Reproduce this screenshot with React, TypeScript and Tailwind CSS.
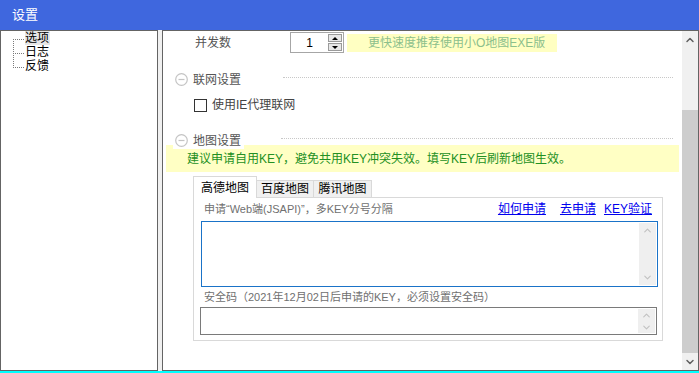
import { ChevronDown, ChevronUp } from 'lucide-react';

const font = "font-['Liberation_Sans','Noto_Sans_CJK_SC',sans-serif]";

function TreeLines() {
  return (
    <svg width="12" height="42" className="shrink-0" shapeRendering="crispEdges">
      <g stroke="#7a7a7a" strokeDasharray="1 1">
        <line x1="0.5" y1="8" x2="0.5" y2="36" />
        <line x1="0" y1="8.5" x2="11" y2="8.5" />
        <line x1="0" y1="22.5" x2="11" y2="22.5" />
        <line x1="0" y1="36.5" x2="11" y2="36.5" />
      </g>
    </svg>
  );
}

function MinusCircle() {
  return (
    <svg width="13" height="13" viewBox="0 0 13 13" className="shrink-0">
      <circle cx="6.5" cy="6.5" r="5.8" fill="none" stroke="#c4c4c4" strokeWidth="1.2" />
      <line x1="3.5" y1="6.5" x2="9.5" y2="6.5" stroke="#c4c4c4" strokeWidth="1.2" />
    </svg>
  );
}

function SectionHeader({ title, boxed }: { title: string; boxed?: boolean }) {
  const box = boxed ? 'ml-[10px] bg-white pl-[2px] pr-[3px]' : 'pl-[12px] pr-[3px]';
  return (
    <div className="flex h-[17px] items-center">
      <div className={`relative z-10 flex h-[17px] items-center gap-[5px] ${box}`}>
        <MinusCircle />
        <span className="text-[12px] leading-none text-[#555]">{title}</span>
      </div>
      <div className={`mb-[4px] mr-[9px] flex-1 border-t border-dotted border-[#c8c8c8] ${boxed ? 'ml-[37px]' : 'ml-[39px]'}`} />
    </div>
  );
}

function MiniScroll({ h, stacked }: { h: string; stacked?: boolean }) {
  return (
    <div className={`flex w-[17px] flex-col items-center bg-[#efefef] ${stacked ? 'justify-center gap-[1px]' : 'justify-between py-[2px]'} ${h}`}>
      <ChevronUp className="h-[11px] w-[11px] text-[#c2c2c2]" strokeWidth={2.5} />
      <ChevronDown className="h-[11px] w-[11px] text-[#c2c2c2]" strokeWidth={2.5} />
    </div>
  );
}

export default function App() {
  return (
    <div className={`flex h-[373px] w-[699px] flex-col overflow-hidden bg-[#f0f0f0] ${font}`}>
      <div className="flex h-[30px] items-center bg-[#3f67de] pl-[12px] text-[13px] text-white">设置</div>

      <div className="flex h-[341px] gap-[4px]">
        <div className="w-[158px] border border-[#646464] bg-white pl-[12px]">
          <div className="flex">
            <TreeLines />
            <div className="flex flex-col text-[12px] leading-[14px] text-black">
              <span className="w-fit bg-[#e6e6e6] pr-[1px]">选项</span>
              <span>日志</span>
              <span>反馈</span>
            </div>
          </div>
        </div>

        <div className="flex w-[537px] border border-[#646464] bg-white">
          <div className="flex-1 pt-[1px]">
            {/* 并发数 */}
            <div className="flex h-[21px] items-center pl-[32px]">
              <span className="w-[95px] text-[12px] text-[#555]">并发数</span>
              <div className="flex h-[21px] w-[54px] items-center border border-[#a6a6a6] bg-white">
                <span className="w-[37px] text-center text-[12px] text-black">1</span>
                <div className="flex h-[17px] w-[14px] flex-col">
                  <div className="flex h-[8px] items-center justify-center border border-[#9a9a9a] bg-[#e8e8e8]">
                    <div className="h-0 w-0 border-x-[3px] border-b-[3px] border-x-transparent border-b-black" />
                  </div>
                  <div className="mt-[1px] flex h-[8px] items-center justify-center border border-[#9a9a9a] bg-[#e8e8e8]">
                    <div className="h-0 w-0 border-x-[3px] border-t-[3px] border-x-transparent border-t-black" />
                  </div>
                </div>
              </div>
              <div className="ml-[3px] flex h-[18px] w-[210px] items-center bg-[#ffffc2] pl-[21px] text-[12px] text-[#8cc08c]">
                更快速度推荐使用小O地图EXE版
              </div>
            </div>

            <div className="mt-[18px]">
              <SectionHeader title="联网设置" />
            </div>

            <div className="mt-[9px] flex h-[16px] items-center gap-[5px] pl-[31px]">
              <div className="h-[13px] w-[13px] border border-[#333] bg-white" />
              <span className="text-[12px] text-[#444]">使用IE代理联网</span>
            </div>

            <div className="mt-[19px]">
              <SectionHeader title="地图设置" boxed />
            </div>

            <div className="mx-[3px] -mt-[4px] flex h-[27px] items-center bg-[#ffffc4] pl-[21px] text-[12px] text-[#239023]">
              建议申请自用KEY，避免共用KEY冲突失效。填写KEY后刷新地图生效。
            </div>

            {/* tabs */}
            <div className="ml-[30px] mt-[4px] w-[470px]">
              <div className="flex items-end">
                <div className="relative z-10 -mb-px flex h-[22px] w-[64px] items-center justify-center border border-b-0 border-[#d9d9d9] bg-white text-[12px] text-black">
                  高德地图
                </div>
                <div className="flex h-[17px] w-[57px] items-center justify-center border border-l-0 border-b-0 border-[#d9d9d9] bg-[#f0f0f0] text-[12px] text-black">
                  百度地图
                </div>
                <div className="flex h-[17px] w-[58px] items-center justify-center border border-l-0 border-b-0 border-[#d9d9d9] bg-[#f0f0f0] text-[12px] text-black">
                  腾讯地图
                </div>
              </div>
              <div className="h-[144px] border border-[#d9d9d9] bg-white pt-[1px]">
                <div className="flex h-[20px] items-center pl-[10px] pr-[10px] text-[11px] text-[#707070]">
                  <span>申请“Web端(JSAPI)”，多KEY分号分隔</span>
                  <span className="ml-auto text-[12px] text-[#0000ee] underline">如何申请</span>
                  <span className="ml-[14px] text-[12px] text-[#0000ee] underline">去申请</span>
                  <span className="ml-[8px] text-[12px] text-[#0000ee] underline">KEY验证</span>
                </div>
                <div className="ml-[7px] mt-[2px] flex h-[66px] w-[457px] justify-end border border-[#1a73c8] bg-white p-[1px]">
                  <MiniScroll h="h-full" />
                </div>
                <div className="flex h-[20px] items-center pl-[10px] text-[11px] text-[#707070]">
                  安全码（2021年12月02日后申请的KEY，必须设置安全码）
                </div>
                <div className="ml-[6px] flex h-[28px] w-[457px] justify-end border border-[#7a7a7a] bg-white p-[1px]">
                  <MiniScroll h="h-full" stacked />
                </div>
              </div>
            </div>
          </div>

          {/* main scrollbar */}
          <div className="flex w-[16px] flex-col bg-[#f0f0f0]">
            <div className="flex h-[17px] items-center justify-center">
              <ChevronUp className="h-[12px] w-[12px] text-[#606060]" strokeWidth={3} />
            </div>
            <div className="mt-[62px] h-[243px] bg-[#cdcdcd]" />
            <div className="flex flex-1 items-center justify-center">
              <ChevronDown className="h-[12px] w-[12px] text-[#606060]" strokeWidth={3} />
            </div>
          </div>
        </div>
      </div>

      <div className="h-[2px] bg-[#00ffff]" />
    </div>
  );
}
